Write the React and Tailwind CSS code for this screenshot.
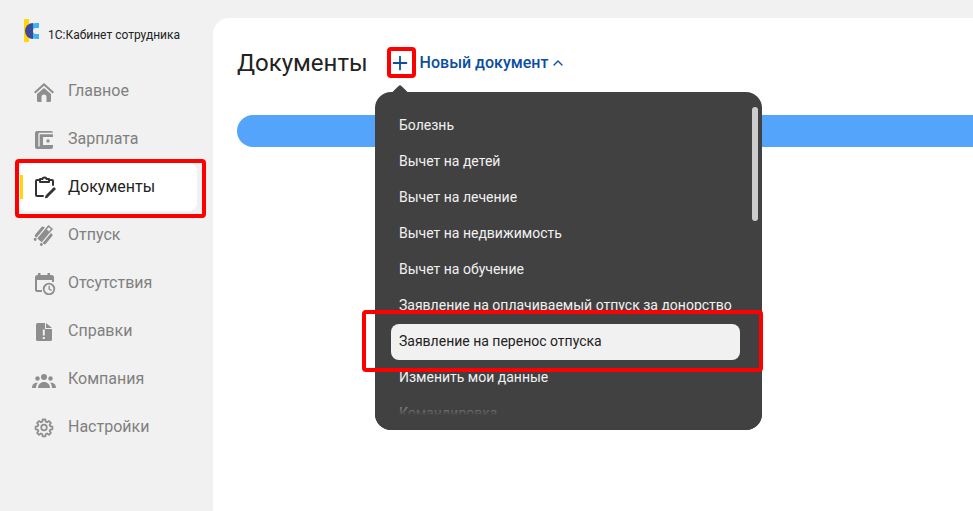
import { Plus, ChevronUp } from 'lucide-react'

const font = { fontFamily: 'Roboto, sans-serif' }

const HomeIcon = () => (
  <svg width="24" height="24" viewBox="0 0 24 24" fill="#8e8e8e">
    <path d="M11 4 1 13l1.400 1.500L11 6.800l8.600 7.700L21 13z" />
    <path d="M11 9 4 15v6.500A1.500 1.500 0 0 0 5.500 23H8.500v-5a2.500 2.500 0 0 1 5 0v5h3a1.500 1.500 0 0 0 1.500-1.500V15z" />
  </svg>
)

const WalletIcon = () => (
  <svg width="24" height="24" viewBox="0 0 24 24">
    <rect x="2" y="4" width="18" height="18" rx="2" fill="#8e8e8e" />
    <path d="M6 6.500h14M6 6.500v13" stroke="#f1f1f1" strokeWidth="1.300" fill="none" />
    <rect x="10" y="10" width="10" height="8" fill="#f1f1f1" />
    <circle cx="15" cy="14" r="1.700" fill="#8e8e8e" />
  </svg>
)

const ClipboardIcon = () => (
  <svg width="24" height="24" viewBox="0 0 24 24" fill="none" stroke="#333" strokeWidth="2" strokeLinecap="round" strokeLinejoin="round">
    <path d="M6 5H4a1 1 0 0 0-1 1v14a1 1 0 0 0 1 1h6" />
    <path d="M17 5h2a1 1 0 0 1 1 1v4" />
    <path d="M7 7V4h2.500a2 1.500 0 0 1 4 0H16v3z" />
    <path d="m14 21 8-8" strokeWidth="2.800" strokeLinecap="butt" />
    <path d="m12.500 22.500.8-2.300 1.500 1.500z" fill="#333" strokeWidth="1" />
  </svg>
)

const SuitcaseIcon = () => (
  <svg width="24" height="24" viewBox="0 0 24 24" fill="#8e8e8e">
    <g transform="rotate(40 11 12)">
      <rect x="4" y="6" width="14" height="13" rx="1.500" />
      <path d="M7.500 6v13M14.500 6v13" stroke="#f1f1f1" strokeWidth="1.200" />
      <path d="M8 6V1.500h6V6h-1.500V3h-3v3z" />
      <circle cx="7" cy="21" r="1.500" />
      <circle cx="15" cy="21" r="1.500" />
    </g>
  </svg>
)

const CalendarIcon = () => (
  <svg width="24" height="24" viewBox="0 0 24 24" fill="#8e8e8e">
    <path d="M5 2h2.500v2h7V2H17v2h1.500A2.500 2.500 0 0 1 21 6.500V11h-2V9H4v10h5v2H4.500A2.500 2.500 0 0 1 2 18.500v-12A2.500 2.500 0 0 1 4.500 4H5z" />
    <circle cx="16" cy="18" r="5.300" fill="none" stroke="#8e8e8e" strokeWidth="1.800" />
    <path d="M15.500 14.800h1.300v3l2.200 1.300-.6 1-2.900-1.700z" />
  </svg>
)

const FileIcon = () => (
  <svg width="24" height="24" viewBox="0 0 24 24">
    <path d="M4.500 4H12v6h7v10.500a1.500 1.500 0 0 1-1.500 1.500h-13A1.500 1.500 0 0 1 3 20.500v-15A1.500 1.500 0 0 1 4.500 4z" fill="#8e8e8e" />
    <path d="M13 4l6 5h-6z" fill="#8e8e8e" />
    <path d="M9.800 10.500h2v6h-2zM9.800 18h2v2h-2z" fill="#f1f1f1" />
  </svg>
)

const PeopleIcon = () => (
  <svg width="24" height="24" viewBox="0 0 24 24" fill="#8e8e8e" className="overflow-visible">
    <circle cx="11" cy="10" r="3" />
    <circle cx="4.500" cy="11.500" r="2.200" />
    <circle cx="17.500" cy="11.500" r="2.200" />
    <path d="M5 21c0-3.500 2.700-6 6-6s6 2.500 6 6z" />
    <path d="M-1 21c0-3 1.800-5.300 4.300-5.300.6 0 1 .1 1.400.3C3.600 17.300 3 19 3 21zM23 21c0-3-1.800-5.300-4.300-5.300-.6 0-1 .1-1.400.3 1.100 1.300 1.700 3 1.700 5z" />
  </svg>
)

const GearIcon = () => (
  <svg width="24" height="24" viewBox="0 0 24 24" fill="none" stroke="#8e8e8e" strokeWidth="2.200" strokeLinejoin="round">
    <g transform="translate(1.400 2.900) scale(0.8)">
      <path d="M10.300 2h3.400l.5 2.800 1.600.7 2.400-1.600 2.400 2.400-1.600 2.400.7 1.600 2.800.5v3.400l-2.800.5-.7 1.600 1.600 2.400-2.400 2.400-2.400-1.600-1.600.7-.5 2.800h-3.400l-.5-2.800-1.600-.7-2.400 1.600-2.400-2.400 1.600-2.400-.7-1.600-2.800-.5v-3.400l2.800-.5.7-1.600-1.600-2.400 2.400-2.400 2.400 1.600 1.600-.7z" />
      <circle cx="12" cy="12" r="3.500" />
    </g>
  </svg>
)

const navItems = [
  { label: 'Главное', icon: <HomeIcon /> },
  { label: 'Зарплата', icon: <WalletIcon /> },
  { label: 'Документы', icon: <ClipboardIcon />, active: true },
  { label: 'Отпуск', icon: <SuitcaseIcon /> },
  { label: 'Отсутствия', icon: <CalendarIcon /> },
  { label: 'Справки', icon: <FileIcon /> },
  { label: 'Компания', icon: <PeopleIcon /> },
  { label: 'Настройки', icon: <GearIcon /> },
]

const menuItems = [
  'Болезнь',
  'Вычет на детей',
  'Вычет на лечение',
  'Вычет на недвижимость',
  'Вычет на обучение',
  'Заявление на оплачиваемый отпуск за донорство',
  'Заявление на перенос отпуска',
  'Изменить мои данные',
  'Командировка',
]

export default function App() {
  return (
    <div className="relative flex h-[511px] w-[973px] overflow-hidden bg-[#f1f1f1]" style={font}>
      <aside className="w-[213px] shrink-0">
        <div className="flex h-[67px] items-start pl-6 pt-[19px]">
          <svg width="20" height="24" viewBox="0 0 20 24" className="shrink-0">
            <rect x="0" y="0" width="5" height="23" fill="#ffd60a" />
            <path d="M15 6.500h-3a5.500 5.500 0 0 0 0 11h3" fill="none" stroke="#3fb4f3" strokeWidth="5" />
            <path d="M9 4a8 8 0 0 0 0 16z" fill="#3b4a9c" />
          </svg>
          <span className="ml-[4px] mt-[9px] text-xs leading-[14px] text-[#222]">1С:Кабинет сотрудника</span>
        </div>
        <nav className="flex flex-col pl-[19px] pr-[16px]">
          {navItems.map((item) => (
            <div
              key={item.label}
              className={`relative flex h-12 items-center pl-[14px] text-base ${item.active ? 'rounded-lg bg-white text-[#222]' : 'text-[#808080]'}`}
            >
              {item.active && <span className="absolute left-px top-[12px] h-[24px] w-[3px] bg-[#ffd60a]" />}
              <span className="flex w-[35px] shrink-0">{item.icon}</span>
              <span>{item.label}</span>
            </div>
          ))}
        </nav>
      </aside>

      <main className="mt-[18px] flex-1 rounded-tl-2xl bg-white pl-6">
        <div className="flex h-[90px] items-start pt-[29px]">
          <h1 className="text-2xl font-normal leading-[32px] text-[#222]">Документы</h1>
          <Plus className="ml-[21px] mt-[5px] text-[#0b4f9e]" size={22} strokeWidth={2} />
          <span className="ml-[9px] mt-[5px] text-base font-medium leading-[22px] text-[#0b4f9e]">Новый документ</span>
          <ChevronUp className="ml-[2px] mt-[8px] text-[#0b4f9e]" size={16} strokeWidth={2} />
        </div>
        <div className="mt-[7px] h-8 rounded-l-2xl bg-[#55a4fb]" />
      </main>

      {/* popup menu */}
      <div className="absolute left-[375px] top-[92px] h-[338px] w-[387px] rounded-2xl bg-[#414141]">
        <div className="absolute -top-[5px] left-[19px] h-[12px] w-[12px] rotate-45 rounded-[2px] bg-[#414141]" />
        <div className="relative h-full overflow-hidden rounded-2xl pt-[16px]">
          {menuItems.map((text, i) => (
            <div
              key={text}
              className={`mx-4 mr-[22px] flex h-9 items-center rounded-lg px-2 pb-[2px] text-sm ${i === 6 ? 'bg-[#f1f1f1] text-[#222]' : 'text-[#f1f1f1]'}`}
            >
              {text}
            </div>
          ))}
          <div className="absolute bottom-0 left-0 right-0 h-[36px] bg-gradient-to-b from-transparent via-[#414141] via-60% to-[#414141]" />
          <div className="absolute right-[4px] top-[15px] h-[114px] w-[6px] rounded-full bg-[#cccccc]" />
        </div>
      </div>

      {/* red annotation frames */}
      <div className="absolute left-[15px] top-[159px] h-[59px] w-[191px] rounded-sm border-4 border-[#ff0000]" />
      <div className="absolute left-[387px] top-[47px] h-[31px] w-[29px] rounded-sm border-4 border-[#ff0000]" />
      <div className="absolute left-[362px] top-[310px] h-[62px] w-[401px] rounded-sm border-4 border-[#ff0000]" />
    </div>
  )
}
